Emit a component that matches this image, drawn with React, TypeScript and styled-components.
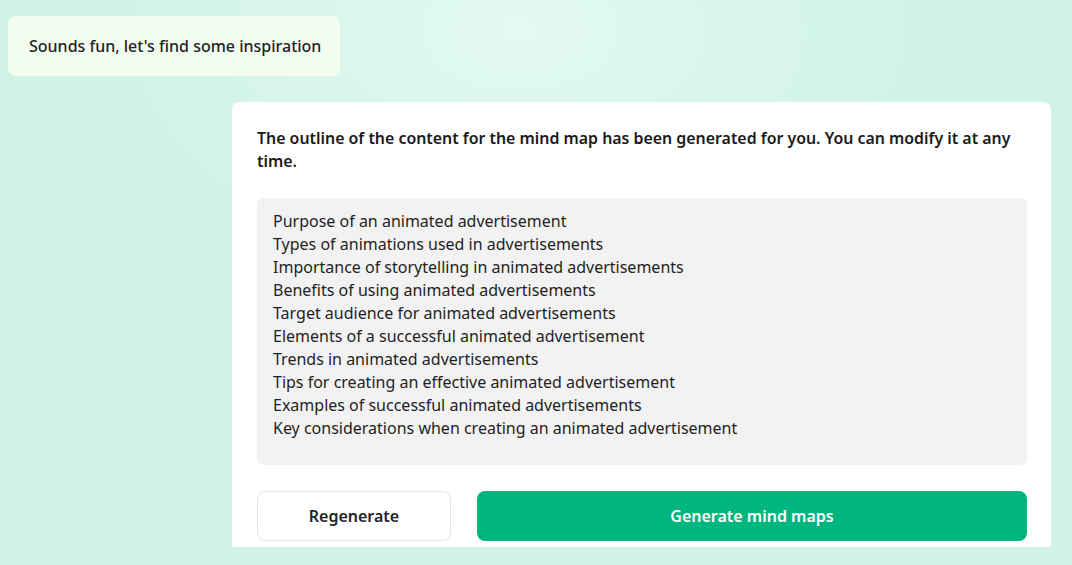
import React from "react";
import styled, { createGlobalStyle } from "styled-components";

const GlobalStyle = createGlobalStyle`
  html, body {
    margin: 0;
    padding: 0;
    height: 100%;
  }
  body {
    font-family: "Noto Sans", "Open Sans", Arial, sans-serif;
    color: #1a1a1a;
  }
`;

const Page = styled.div`
  width: 1072px;
  height: 565px;
  overflow: hidden;
  background: radial-gradient(
      ellipse 420px 260px at 520px 30px,
      #e3faf0 0%,
      rgba(227, 250, 240, 0) 100%
    ),
    #d0f2e7;
`;

const Thread = styled.div`
  display: flex;
  flex-direction: column;
  padding: 16px 21px 0 8px;
  height: 531px;
  overflow: hidden;
`;

const UserBubble = styled.div`
  align-self: flex-start;
  background: #f3fdef;
  border-radius: 8px;
  padding: 0 19px 0 21px;
  height: 60px;
  display: flex;
  align-items: center;
  font-size: 16px;
  font-weight: 500;
  color: #1f2328;
`;

const Card = styled.div`
  margin: 26px 0 0 224px;
  background: #ffffff;
  border-radius: 8px 8px 0 0;
  padding: 25px 24px 0 25px;
  flex: 1;
  display: flex;
  flex-direction: column;
`;

const Heading = styled.p`
  margin: 0;
  font-size: 15.9px;
  font-weight: 600;
  line-height: 23px;
  color: #1a1a1a;
`;

const Outline = styled.div`
  margin-top: 25px;
  background: #f2f2f2;
  border-radius: 6px;
  height: 267px;
  box-sizing: border-box;
  padding: 12px 16px;
  font-size: 16px;
  line-height: 23px;
  color: #1f1f1f;
`;

const Actions = styled.div`
  display: flex;
  gap: 26px;
  margin-top: 26px;
`;

const Button = styled.button<{ $primary?: boolean }>`
  height: 50px;
  border-radius: 8px;
  font-family: inherit;
  font-size: 16px;
  font-weight: 600;
  cursor: pointer;
  box-sizing: border-box;
  flex: ${(p) => (p.$primary ? "1" : "0 0 194px")};
  background: ${(p) => (p.$primary ? "#00b67e" : "#ffffff")};
  color: ${(p) => (p.$primary ? "#ffffff" : "#1f2328")};
  border: ${(p) => (p.$primary ? "none" : "1px solid #e6e6e6")};
`;

const topics = [
  "Purpose of an animated advertisement",
  "Types of animations used in advertisements",
  "Importance of storytelling in animated advertisements",
  "Benefits of using animated advertisements",
  "Target audience for animated advertisements",
  "Elements of a successful animated advertisement",
  "Trends in animated advertisements",
  "Tips for creating an effective animated advertisement",
  "Examples of successful animated advertisements",
  "Key considerations when creating an animated advertisement",
];

export default function App() {
  return (
    <Page>
      <GlobalStyle />
      <Thread>
        <UserBubble>Sounds fun, let's find some inspiration</UserBubble>
        <Card>
          <Heading>
            The outline of the content for the mind map has been generated for
            you. You can modify it at any time.
          </Heading>
          <Outline>
            {topics.map((t) => (
              <div key={t}>{t}</div>
            ))}
          </Outline>
          <Actions>
            <Button>Regenerate</Button>
            <Button $primary>Generate mind maps</Button>
          </Actions>
        </Card>
      </Thread>
    </Page>
  );
}
